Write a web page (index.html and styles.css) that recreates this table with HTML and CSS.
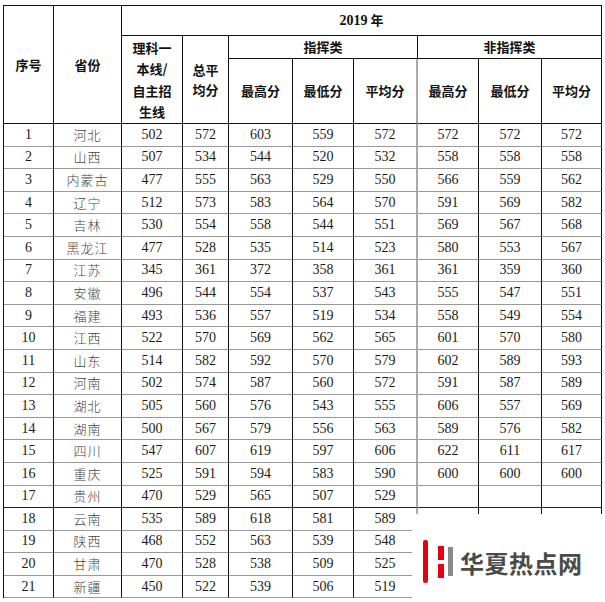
FILE: index.html
```html
<!DOCTYPE html>
<html lang="zh-CN">
<head>
<meta charset="utf-8">
<title>2019年分数线</title>
<link rel="stylesheet" href="styles.css">
</head>
<body>
<div class="page">
<table class="score">
<colgroup>
<col class="c1"><col class="c2"><col class="c3"><col class="c4"><col class="c5"><col class="c6"><col class="c7"><col class="c8"><col class="c9"><col class="c10">
</colgroup>
<thead>
<tr class="hr1">
<th rowspan="3" class="hd">序号</th>
<th rowspan="3" class="hd">省份</th>
<th colspan="8" class="hd"><span class="yr">2019</span> 年</th>
</tr>
<tr class="hr2">
<th rowspan="2" class="hd multi">理科一<br>本线/<br>自主招<br>生线</th>
<th rowspan="2" class="hd multi2">总平<br>均分</th>
<th colspan="3" class="hd">指挥类</th>
<th colspan="3" class="hd">非指挥类</th>
</tr>
<tr class="hr3">
<th class="hd">最高分</th><th class="hd">最低分</th><th class="hd gr">平均分</th>
<th class="hd">最高分</th><th class="hd">最低分</th><th class="hd">平均分</th>
</tr>
</thead>
<tbody>
<tr><td>1</td><td class="p">河北</td><td>502</td><td>572</td><td>603</td><td>559</td><td class="gr">572</td><td>572</td><td>572</td><td>572</td></tr>
<tr><td>2</td><td class="p">山西</td><td>507</td><td>534</td><td>544</td><td>520</td><td class="gr">532</td><td>558</td><td>558</td><td>558</td></tr>
<tr><td>3</td><td class="p">内蒙古</td><td>477</td><td>555</td><td>563</td><td>529</td><td class="gr">550</td><td>566</td><td>559</td><td>562</td></tr>
<tr><td>4</td><td class="p">辽宁</td><td>512</td><td>573</td><td>583</td><td>564</td><td class="gr">570</td><td>591</td><td>569</td><td>582</td></tr>
<tr><td>5</td><td class="p">吉林</td><td>530</td><td>554</td><td>558</td><td>544</td><td class="gr">551</td><td>569</td><td>567</td><td>568</td></tr>
<tr><td>6</td><td class="p">黑龙江</td><td>477</td><td>528</td><td>535</td><td>514</td><td class="gr">523</td><td>580</td><td>553</td><td>567</td></tr>
<tr><td>7</td><td class="p">江苏</td><td>345</td><td>361</td><td>372</td><td>358</td><td class="gr">361</td><td>361</td><td>359</td><td>360</td></tr>
<tr><td>8</td><td class="p">安徽</td><td>496</td><td>544</td><td>554</td><td>537</td><td class="gr">543</td><td>555</td><td>547</td><td>551</td></tr>
<tr><td>9</td><td class="p">福建</td><td>493</td><td>536</td><td>557</td><td>519</td><td class="gr">534</td><td>558</td><td>549</td><td>554</td></tr>
<tr><td>10</td><td class="p">江西</td><td>522</td><td>570</td><td>569</td><td>562</td><td class="gr">565</td><td>601</td><td>570</td><td>580</td></tr>
<tr><td>11</td><td class="p">山东</td><td>514</td><td>582</td><td>592</td><td>570</td><td class="gr">579</td><td>602</td><td>589</td><td>593</td></tr>
<tr><td>12</td><td class="p">河南</td><td>502</td><td>574</td><td>587</td><td>560</td><td class="gr">572</td><td>591</td><td>587</td><td>589</td></tr>
<tr><td>13</td><td class="p">湖北</td><td>505</td><td>560</td><td>576</td><td>543</td><td class="gr">555</td><td>606</td><td>557</td><td>569</td></tr>
<tr><td>14</td><td class="p">湖南</td><td>500</td><td>567</td><td>579</td><td>556</td><td class="gr">563</td><td>589</td><td>576</td><td>582</td></tr>
<tr><td>15</td><td class="p">四川</td><td>547</td><td>607</td><td>619</td><td>597</td><td class="gr">606</td><td>622</td><td>611</td><td>617</td></tr>
<tr><td>16</td><td class="p">重庆</td><td>525</td><td>591</td><td>594</td><td>583</td><td class="gr">590</td><td>600</td><td>600</td><td>600</td></tr>
<tr class="dk"><td>17</td><td class="p">贵州</td><td>470</td><td>529</td><td>565</td><td>507</td><td class="gr">529</td><td></td><td></td><td></td></tr>
<tr><td>18</td><td class="p">云南</td><td>535</td><td>589</td><td>618</td><td>581</td><td class="gr">589</td><td></td><td></td><td></td></tr>
<tr><td>19</td><td class="p">陕西</td><td>468</td><td>552</td><td>563</td><td>539</td><td class="gr">548</td><td></td><td></td><td></td></tr>
<tr><td>20</td><td class="p">甘肃</td><td>470</td><td>528</td><td>538</td><td>509</td><td class="gr">525</td><td></td><td></td><td></td></tr>
<tr><td>21</td><td class="p">新疆</td><td>450</td><td>522</td><td>539</td><td>506</td><td class="gr">519</td><td></td><td></td><td></td></tr>
</tbody>
</table>
<div class="mark">
<svg class="logo" width="36" height="48" viewBox="0 0 36 48">
<rect x="2" y="2" width="5" height="43" rx="2" fill="#e60012"/>
<rect x="17" y="8" width="6" height="14" fill="#e60012"/>
<rect x="17" y="26" width="6" height="14" fill="#e60012"/>
<rect x="27" y="9" width="5" height="29" fill="#8a8a8a"/>
</svg>
<span class="brand">华夏热点网</span>
</div>
</div>
</body>
</html>
```
FILE: styles.css
```css
html, body {
  margin: 0;
  padding: 0;
  background: #ffffff;
}
.page {
  position: relative;
  width: 605px;
  height: 602px;
  overflow: hidden;
}
.score {
  margin: 5px 0 0 3px;
  border-collapse: separate;
  border-spacing: 0;
  table-layout: fixed;
  width: 599px;
  border-left: 1px solid #111;
  border-top: 1px solid #111;
  font-family: "Liberation Serif", "Times New Roman", serif;
  font-size: 14px;
  color: #1a1a1a;
}
.c1 { width: 50px; }
.c2 { width: 68px; }
.c3 { width: 61px; }
.c4 { width: 46px; }
.c5 { width: 64px; }
.c6 { width: 61px; }
.c7 { width: 64px; }
.c8 { width: 61px; }
.c9 { width: 63px; }
.c10 { width: 60px; }
.score th, .score td {
  padding: 0;
  text-align: center;
  vertical-align: middle;
  border-right: 1px solid #111;
  border-bottom: 1px solid #999;
  overflow: hidden;
  white-space: nowrap;
}
.score th {
  border-bottom-color: #111;
  font-family: "Noto Sans CJK SC", sans-serif;
  font-weight: 700;
  font-size: 13px;
  color: #111;
  line-height: 18px;
}
.score th.gr, .score td.gr {
  border-right: 2px solid #aaa;
}
.yr {
  font-family: "Liberation Serif", serif;
  font-weight: 700;
  font-size: 14px;
}
.hr1 { height: 30px; }
.hr2 { height: 23px; }
.hr3 { height: 65px; }
.score th.multi { line-height: 21.5px; }
.score th.multi2 { line-height: 20px; }
.score tbody tr { height: 22.6px; }
.score td { line-height: 16px; }
.score td.p {
  font-family: "Noto Sans CJK SC", sans-serif;
  font-weight: 300;
  font-size: 13px;
  color: #444;
  letter-spacing: 1px;
}
.dk td { border-bottom-color: #222; }
.mark {
  position: absolute;
  left: 412px;
  top: 514px;
  width: 193px;
  height: 88px;
  background: #ffffff;
  display: flex;
  align-items: center;
  padding-left: 9px;
  box-sizing: border-box;
}
.logo {
  display: block;
  margin-top: 8px;
}
.brand {
  margin-left: 3px;
  margin-top: 8px;
  font-family: "Noto Sans CJK SC", sans-serif;
  font-weight: 700;
  font-size: 24px;
  letter-spacing: 0.5px;
  color: #4a4a4a;
}
```
